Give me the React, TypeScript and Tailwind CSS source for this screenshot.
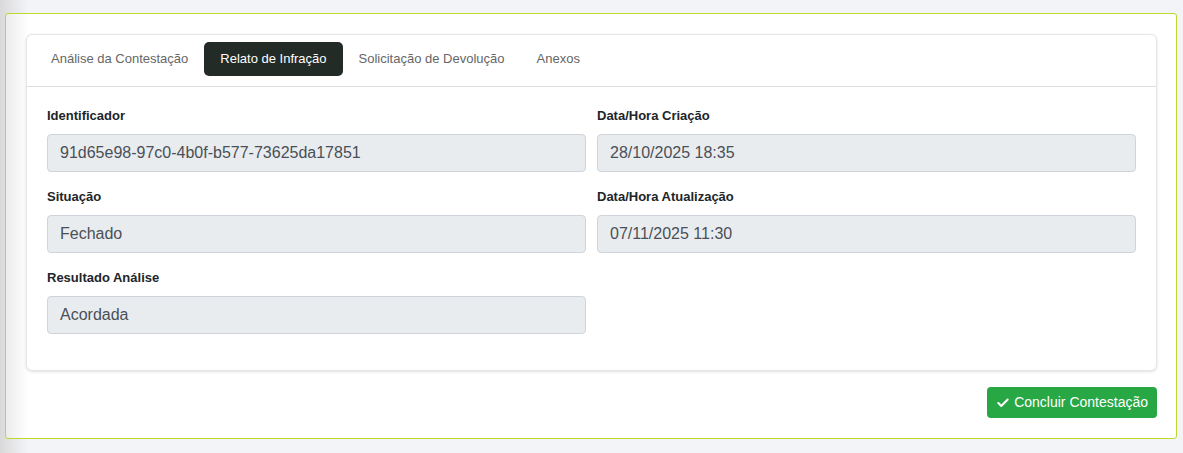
import { Check } from "lucide-react";

const tabs = ["Análise da Contestação", "Relato de Infração", "Solicitação de Devolução", "Anexos"];

const fields: { label: string; value: string }[][] = [
  [
    { label: "Identificador", value: "91d65e98-97c0-4b0f-b577-73625da17851" },
    { label: "Data/Hora Criação", value: "28/10/2025 18:35" },
  ],
  [
    { label: "Situação", value: "Fechado" },
    { label: "Data/Hora Atualização", value: "07/11/2025 11:30" },
  ],
  [{ label: "Resultado Análise", value: "Acordada" }],
];

function Field({ label, value }: { label: string; value: string }) {
  return (
    <div className="mb-[15px]">
      <div className="mb-2 h-5 text-[13px] font-bold leading-5 text-[#212529]">{label}</div>
      <div className="flex h-[38px] items-center rounded-[4px] border border-[#ced4da] bg-[#e9ecef] px-3 text-[16px] text-[#495057]">
        {value}
      </div>
    </div>
  );
}

export default function App() {
  return (
    <div
      className="min-h-[453px] w-full bg-[linear-gradient(to_right,#d9d9d9,#f3f4f8_28px)] pb-4 pl-[5px] pr-[6px] pt-[13px]"
      style={{ fontFamily: '"Liberation Sans", Arial, sans-serif' }}
    >
      <div className="rounded-[3px] border border-[#bcd92c] bg-[linear-gradient(to_right,#ececec,#ffffff_22px)] py-5 pl-5 pr-[19px]">
        <div className="rounded-[6px] border border-[#e6e6e6] bg-white shadow-[0_1px_3px_rgba(0,0,0,0.12)]">
          <div className="flex border-b border-[#dedede] px-2 pb-[10px] pt-[7px]">
            {tabs.map((t, i) => (
              <div
                key={t}
                className={
                  i === 1
                    ? "flex h-[34px] items-center rounded-[5px] bg-[#232b27] px-4 text-[13px] text-white"
                    : "flex h-[34px] items-center px-4 text-[13px] text-[#666666]"
                }
              >
                {t}
              </div>
            ))}
          </div>
          <div className="px-5 pb-[21px] pt-[19px]">
            {fields.map((row, r) => (
              <div key={r} className="grid grid-cols-2 gap-x-[11px]">
                {row.map((f) => (
                  <Field key={f.label} label={f.label} value={f.value} />
                ))}
              </div>
            ))}
          </div>
        </div>
        <div className="mt-4 flex justify-end">
          <button className="flex h-[31px] items-center gap-1 rounded-[4px] bg-[#28a745] px-[9px] text-[14px] text-white">
            <Check size={14} strokeWidth={3.5} />
            Concluir Contestação
          </button>
        </div>
      </div>
    </div>
  );
}
